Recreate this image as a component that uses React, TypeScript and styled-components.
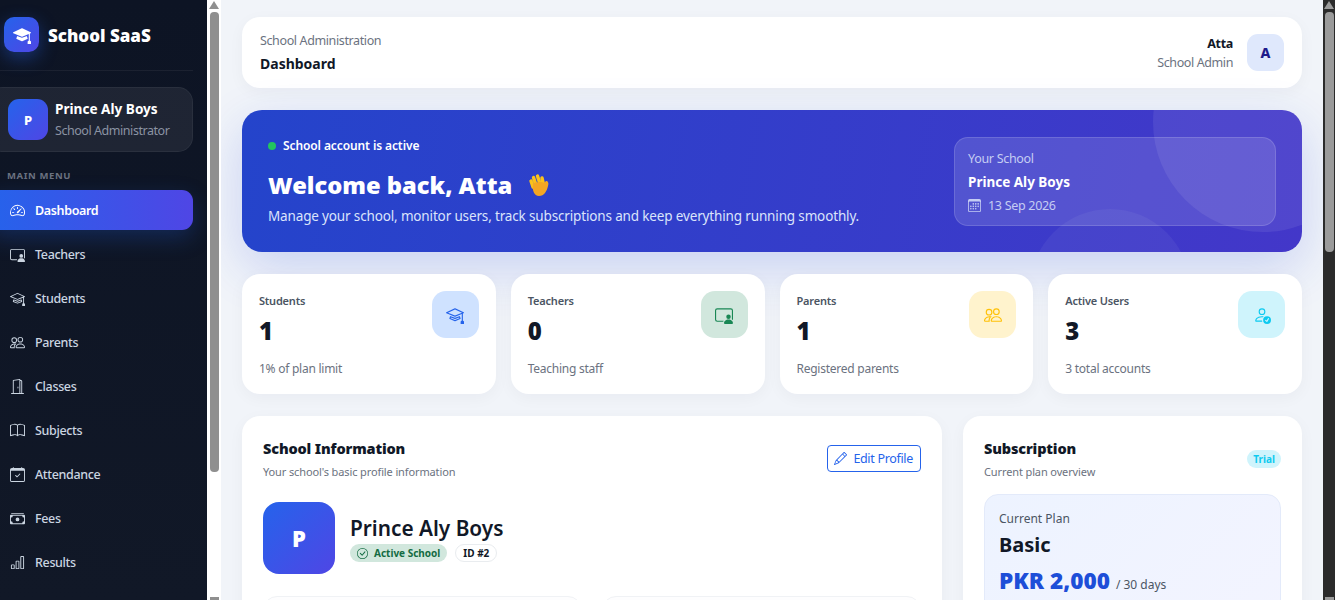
import styled, { createGlobalStyle } from 'styled-components';
import {
  BsSpeedometer2,
  BsPersonVideo3,
  BsMortarboard,
  BsMortarboardFill,
  BsPeople,
  BsDoorOpen,
  BsBook,
  BsCalendarCheck,
  BsCashStack,
  BsBarChart,
  BsCalendar3,
  BsPersonCheck,
  BsPencil,
  BsCheckCircle,
} from 'react-icons/bs';

const GlobalStyle = createGlobalStyle`
  html, body {
    margin: 0;
    height: 100%;
    overflow: hidden;
  }
  body {
    font-family: "Noto Sans", "Open Sans", "Liberation Sans", sans-serif;
    color: #111827;
  }
  * {
    box-sizing: border-box;
  }
`;

const Shell = styled.div`
  display: flex;
  height: 100vh;
  background: #f1f4f9;
`;

const Rail = styled.div<{ $track: string; $width: number }>`
  display: flex;
  flex-direction: column;
  align-items: center;
  flex: 0 0 ${(p) => p.$width}px;
  height: 100vh;
  overflow: hidden;
  background: ${(p) => p.$track};
`;

const ArrowUp = styled.div<{ $color: string }>`
  flex-shrink: 0;
  width: 0;
  height: 0;
  margin: 1px 0 3px;
  border-left: 5px solid transparent;
  border-right: 5px solid transparent;
  border-bottom: 8px solid ${(p) => p.$color};
`;

const ArrowDownCap = styled.div<{ $color: string }>`
  flex-shrink: 0;
  width: 9px;
  height: 3px;
  margin-top: auto;
  background: ${(p) => p.$color};
`;

const Thumb = styled.div<{ $color: string; $height: number }>`
  flex-shrink: 0;
  width: 9px;
  height: ${(p) => p.$height}px;
  border-radius: 4px;
  background: ${(p) => p.$color};
`;

const Sidebar = styled.aside`
  display: flex;
  flex: 0 0 221px;
  height: 100vh;
`;

const SidebarInner = styled.div`
  width: 207px;
  height: 100vh;
  overflow: hidden;
  padding: 17px 14px 0 0;
  background: linear-gradient(180deg, #0d1424 0%, #111827 100%);
`;

const Brand = styled.div`
  display: flex;
  align-items: center;
  gap: 9px;
  padding: 0 0 18px 4px;
  border-bottom: 1px solid rgba(255, 255, 255, 0.06);
`;

const BrandMark = styled.div`
  display: flex;
  align-items: center;
  justify-content: center;
  width: 35px;
  height: 35px;
  border-radius: 10px;
  color: #fff;
  font-size: 18px;
  background: linear-gradient(135deg, #2563eb, #4f46e5);
  box-shadow: 0 6px 18px rgba(37, 99, 235, 0.4);
`;

const BrandName = styled.span`
  position: relative;
  top: 1px;
  color: #fff;
  font-size: 17px;
  font-weight: 900;
`;

const SchoolCard = styled.div`
  display: flex;
  align-items: center;
  gap: 7px;
  height: 65px;
  margin: 16px 0 0 -12px;
  padding-left: 19px;
  border-radius: 15px;
  background: rgba(255, 255, 255, 0.07);
  border: 1px solid rgba(255, 255, 255, 0.05);
`;

const SchoolAvatar = styled.div`
  display: flex;
  align-items: center;
  justify-content: center;
  flex: 0 0 40px;
  height: 41px;
  border-radius: 11px;
  color: #fff;
  font-size: 13px;
  font-weight: 800;
  background: linear-gradient(135deg, #2563eb, #4f46e5);
`;

const SchoolCardName = styled.div`
  color: #fff;
  font-size: 13.6px;
  font-weight: 700;
  line-height: 20px;
  white-space: nowrap;
`;

const SchoolCardRole = styled.div`
  margin-top: 2px;
  color: #8b93a3;
  font-size: 12.5px;
  letter-spacing: -0.45px;
  line-height: 20px;
  white-space: nowrap;
`;

const MenuLabel = styled.div`
  margin: 17px 0 0 7px;
  color: #6b7280;
  font-size: 9.5px;
  font-weight: 700;
  letter-spacing: 0.6px;
  line-height: 14px;
`;

const Nav = styled.nav`
  display: flex;
  flex-direction: column;
  gap: 4.12px;
  margin: 7px 0 0 -12px;
`;

const NavItem = styled.a<{ $active?: boolean }>`
  display: flex;
  align-items: center;
  gap: 10px;
  height: 40px;
  padding-left: 22px;
  border-radius: 11px;
  font-size: 12.5px;
  letter-spacing: -0.35px;
  font-weight: ${(p) => (p.$active ? 600 : 500)};
  color: ${(p) => (p.$active ? '#fff' : '#cbd5e1')};
  background: ${(p) => (p.$active ? 'linear-gradient(90deg, #2563eb, #4f46e5)' : 'transparent')};
  box-shadow: ${(p) => (p.$active ? '0 8px 22px rgba(37, 99, 235, 0.25)' : 'none')};

  svg {
    font-size: 15px;
    flex-shrink: 0;
  }
`;

const Main = styled.main`
  flex: 1;
  min-width: 0;
  height: 100vh;
  overflow: hidden;
`;

const Content = styled.div`
  display: flex;
  flex-direction: column;
  gap: 22px;
  padding: 17px 21px 21px;
`;

const TopBar = styled.header`
  display: flex;
  align-items: center;
  justify-content: space-between;
  height: 71px;
  padding: 0 18px;
  border-radius: 18px;
  background: #fff;
  box-shadow: 0 4px 16px rgba(15, 23, 42, 0.04);
`;

const Crumb = styled.div`
  margin-top: 1px;
  color: #6b7280;
  font-size: 12.5px;
  letter-spacing: -0.38px;
  line-height: 18px;
`;

const PageTitle = styled.div`
  margin-top: 4px;
  color: #111827;
  font-size: 14px;
  font-weight: 700;
  line-height: 20px;
`;

const UserBox = styled.div`
  display: flex;
  align-items: center;
  gap: 14px;
  text-align: right;
`;

const UserName = styled.div`
  margin-top: 2px;
  font-size: 12.5px;
  font-weight: 700;
  letter-spacing: -0.3px;
  line-height: 18px;
`;

const UserRole = styled.div`
  color: #6b7280;
  font-size: 12.5px;
  letter-spacing: -0.4px;
  line-height: 19px;
`;

const UserAvatar = styled.div`
  display: flex;
  align-items: center;
  justify-content: center;
  width: 37px;
  height: 37px;
  border-radius: 11px;
  color: #1e1b8b;
  font-size: 14px;
  font-weight: 800;
  background: #dfe8fc;
`;

const HeroGlow = styled.div`
  height: 142px;
  border-radius: 20px;
  box-shadow: 0 16px 50px rgba(37, 70, 220, 0.2);
`;

const Hero = styled.section`
  position: relative;
  display: flex;
  align-items: center;
  justify-content: space-between;
  height: 142px;
  padding: 0 26px;
  overflow: hidden;
  border-radius: 20px;
  color: #fff;
  background: linear-gradient(100deg, #2444cb, #4337c9);
`;

const HeroCircle = styled.div<{ $size: number; $top: number; $right: number; $alpha: number }>`
  position: absolute;
  top: ${(p) => p.$top}px;
  right: ${(p) => p.$right}px;
  width: ${(p) => p.$size}px;
  height: ${(p) => p.$size}px;
  border-radius: 50%;
  background: rgba(255, 255, 255, ${(p) => p.$alpha});
`;

const HeroText = styled.div`
  position: relative;
`;

const StatusLine = styled.div`
  display: flex;
  align-items: center;
  gap: 7px;
  font-size: 12px;
  font-weight: 600;
  letter-spacing: -0.1px;
  line-height: 18px;
`;

const StatusDot = styled.span`
  width: 8px;
  height: 8px;
  border-radius: 50%;
  background: #22c55e;
`;

const HeroTitle = styled.h1`
  display: flex;
  align-items: center;
  gap: 16px;
  margin: 14px 0 0;
  font-size: 23.7px;
  font-weight: 900;
  line-height: 32px;
`;

const HeroSub = styled.p`
  margin: 5px 0 0;
  color: #dbe4fb;
  font-size: 13.5px;
  letter-spacing: -0.15px;
  line-height: 20px;
`;

const HeroSchool = styled.div`
  position: relative;
  width: 322px;
  height: 89px;
  padding: 12px 13px;
  border-radius: 14px;
  border: 1px solid rgba(255, 255, 255, 0.14);
  background: rgba(255, 255, 255, 0.13);
`;

const HeroSchoolLabel = styled.div`
  color: #c5cdf3;
  font-size: 12.5px;
  letter-spacing: -0.3px;
  line-height: 17px;
`;

const HeroSchoolName = styled.div`
  margin-top: 6px;
  font-size: 13.5px;
  font-weight: 700;
  line-height: 19px;
`;

const HeroSchoolDate = styled.div`
  display: flex;
  align-items: center;
  gap: 7px;
  margin-top: 4px;
  color: #c5cdf3;
  font-size: 12.5px;
  letter-spacing: -0.3px;
  line-height: 20px;
`;

const StatGrid = styled.div`
  display: grid;
  grid-template-columns: repeat(4, 1fr);
  gap: 15px;
`;

const StatCard = styled.div`
  display: flex;
  justify-content: space-between;
  height: 120px;
  padding: 17px 17px 0;
  border-radius: 18px;
  background: #fff;
  box-shadow: 0 4px 16px rgba(15, 23, 42, 0.04);
`;

const StatLabel = styled.div`
  margin-top: 2px;
  color: #4b5563;
  font-size: 11px;
  font-weight: 600;
  letter-spacing: -0.2px;
  line-height: 16px;
`;

const StatValue = styled.div`
  margin-top: 6px;
  color: #111827;
  font-size: 24px;
  font-weight: 900;
  line-height: 32px;
`;

const StatFoot = styled.div`
  margin-top: 13px;
  color: #6b7280;
  font-size: 12px;
  letter-spacing: -0.25px;
  line-height: 18px;
`;

const StatIcon = styled.div<{ $bg: string; $fg: string }>`
  display: flex;
  align-items: center;
  justify-content: center;
  width: 47px;
  height: 47px;
  border-radius: 14px;
  font-size: 18px;
  color: ${(p) => p.$fg};
  background: ${(p) => p.$bg};
`;

const PanelGrid = styled.div`
  display: grid;
  grid-template-columns: 700px 1fr;
  gap: 21px;
  align-items: start;
`;

const Panel = styled.section`
  padding: 21px;
  border-radius: 18px;
  background: #fff;
  box-shadow: 0 4px 16px rgba(15, 23, 42, 0.04);
`;

const PanelHead = styled.div`
  display: flex;
  align-items: center;
  justify-content: space-between;
`;

const PanelTitle = styled.h2`
  margin: 0;
  color: #111827;
  font-size: 14.5px;
  font-weight: 900;
  letter-spacing: -0.15px;
  line-height: 22px;
`;

const PanelSub = styled.div`
  margin-top: 5px;
  color: #6b7280;
  font-size: 11px;
  letter-spacing: -0.12px;
  line-height: 16px;
`;

const EditButton = styled.button`
  display: flex;
  align-items: center;
  gap: 6px;
  height: 27px;
  padding: 0 7px 0 6px;
  border: 1px solid #2563eb;
  border-radius: 4px;
  color: #2563eb;
  font-family: inherit;
  font-size: 12.5px;
  letter-spacing: -0.32px;
  background: #fff;
`;

const ProfileRow = styled.div`
  display: flex;
  align-items: center;
  gap: 15px;
  margin-top: 22px;
`;

const ProfileAvatar = styled.div`
  display: flex;
  align-items: center;
  justify-content: center;
  width: 72px;
  height: 72px;
  border-radius: 16px;
  color: #fff;
  font-size: 22px;
  font-weight: 900;
  background: linear-gradient(135deg, #2563eb, #4f46e5);
`;

const ProfileName = styled.div`
  margin-top: -1px;
  font-size: 20.8px;
  font-weight: 600;
  line-height: 30px;
`;

const PillRow = styled.div`
  display: flex;
  gap: 8px;
  margin-top: 1px;
`;

const Pill = styled.span<{ $bg: string; $fg: string; $line?: string }>`
  display: inline-flex;
  align-items: center;
  gap: 6px;
  height: 18px;
  padding: 0 7px;
  border-radius: 9px;
  font-size: 10px;
  font-weight: 700;
  color: ${(p) => p.$fg};
  background: ${(p) => p.$bg};
  border: ${(p) => (p.$line ? `1px solid ${p.$line}` : 'none')};
`;

const TrialPill = styled(Pill)`
  padding: 0 6px;
`;

const InfoGrid = styled.div`
  display: grid;
  grid-template-columns: 1fr 1fr;
  gap: 20px;
  margin-top: 22px;
`;

const InfoBox = styled.div`
  height: 70px;
  border: 1px solid #f0f2f5;
  border-radius: 14px;
  background: #fdfdfe;
`;

const PlanBox = styled.div`
  margin-top: 14px;
  height: 150px;
  padding: 15px 14px;
  border: 1px solid #e3eafa;
  border-radius: 14px;
  background: linear-gradient(135deg, #edf3ff, #f3f4ff);
`;

const PlanLabel = styled.div`
  color: #4b5563;
  font-size: 12px;
  line-height: 18px;
`;

const PlanName = styled.div`
  margin-top: 2px;
  font-size: 20px;
  font-weight: 700;
  line-height: 30px;
`;

const PlanPrice = styled.div`
  display: flex;
  align-items: baseline;
  gap: 6px;
  margin-top: 6px;
  color: #1d4ed8;
  font-size: 22.6px;
  font-weight: 900;
  line-height: 30px;
`;

const PlanTerm = styled.span`
  color: #4b5563;
  font-size: 12px;
  font-weight: 400;
`;

const navItems = [
  { label: 'Dashboard', icon: BsSpeedometer2, active: true },
  { label: 'Teachers', icon: BsPersonVideo3 },
  { label: 'Students', icon: BsMortarboard },
  { label: 'Parents', icon: BsPeople },
  { label: 'Classes', icon: BsDoorOpen },
  { label: 'Subjects', icon: BsBook },
  { label: 'Attendance', icon: BsCalendarCheck },
  { label: 'Fees', icon: BsCashStack },
  { label: 'Results', icon: BsBarChart },
];

const stats = [
  { label: 'Students', value: '1', foot: '1% of plan limit', icon: BsMortarboard, bg: '#cfe2ff', fg: '#2563eb' },
  { label: 'Teachers', value: '0', foot: 'Teaching staff', icon: BsPersonVideo3, bg: '#d1e7dd', fg: '#198754' },
  { label: 'Parents', value: '1', foot: 'Registered parents', icon: BsPeople, bg: '#fff3cd', fg: '#ffc107' },
  { label: 'Active Users', value: '3', foot: '3 total accounts', icon: BsPersonCheck, bg: '#cff4fc', fg: '#0dcaf0' },
];

function WaveHand() {
  return (
    <svg width="23" height="24" viewBox="0 0 23 24" fill="none" strokeLinecap="round">
      <path d="M5 14 3 8M8 12 5.500 4.500M12 11 9.500 3M15.500 11.500 14 5" stroke="#fcc21b" strokeWidth="3.4" />
      <path d="M5 11c1-2 9-3 11-1l2-2c2 0 3 2 2 5-1 5-4 10-9 10-5 0-7-6-6-12Z" fill="#f5a623" />
    </svg>
  );
}

export default function App() {
  return (
    <>
      <GlobalStyle />
      <Shell>
        <Sidebar>
          <SidebarInner>
            <Brand>
              <BrandMark>
                <BsMortarboardFill />
              </BrandMark>
              <BrandName>School SaaS</BrandName>
            </Brand>
            <SchoolCard>
              <SchoolAvatar>P</SchoolAvatar>
              <div>
                <SchoolCardName>Prince Aly Boys</SchoolCardName>
                <SchoolCardRole>School Administrator</SchoolCardRole>
              </div>
            </SchoolCard>
            <MenuLabel>MAIN MENU</MenuLabel>
            <Nav>
              {navItems.map((item) => (
                <NavItem key={item.label} $active={item.active}>
                  <item.icon />
                  {item.label}
                </NavItem>
              ))}
            </Nav>
          </SidebarInner>
          <Rail $track="#fff" $width={14}>
            <ArrowUp $color="#8f8f8f" />
            <Thumb $color="#8f8f8f" $height={460} />
            <ArrowDownCap $color="#8f8f8f" />
          </Rail>
        </Sidebar>
        <Main>
          <Content>
            <TopBar>
              <div>
                <Crumb>School Administration</Crumb>
                <PageTitle>Dashboard</PageTitle>
              </div>
              <UserBox>
                <div>
                  <UserName>Atta</UserName>
                  <UserRole>School Admin</UserRole>
                </div>
                <UserAvatar>A</UserAvatar>
              </UserBox>
            </TopBar>

            <HeroGlow>
              <Hero>
                <HeroCircle $size={220} $top={-98} $right={-71} $alpha={0.08} />
                <HeroCircle $size={160} $top={99} $right={112} $alpha={0.05} />
                <HeroText>
                  <StatusLine>
                    <StatusDot />
                    School account is active
                  </StatusLine>
                  <HeroTitle>
                    Welcome back, Atta
                    <WaveHand />
                  </HeroTitle>
                  <HeroSub>Manage your school, monitor users, track subscriptions and keep everything running smoothly.</HeroSub>
                </HeroText>
                <HeroSchool>
                  <HeroSchoolLabel>Your School</HeroSchoolLabel>
                  <HeroSchoolName>Prince Aly Boys</HeroSchoolName>
                  <HeroSchoolDate>
                    <BsCalendar3 size={13} />
                    13 Sep 2026
                  </HeroSchoolDate>
                </HeroSchool>
              </Hero>
            </HeroGlow>

            <StatGrid>
              {stats.map((s) => (
                <StatCard key={s.label}>
                  <div>
                    <StatLabel>{s.label}</StatLabel>
                    <StatValue>{s.value}</StatValue>
                    <StatFoot>{s.foot}</StatFoot>
                  </div>
                  <StatIcon $bg={s.bg} $fg={s.fg}>
                    <s.icon />
                  </StatIcon>
                </StatCard>
              ))}
            </StatGrid>

            <PanelGrid>
              <Panel>
                <PanelHead>
                  <div>
                    <PanelTitle>School Information</PanelTitle>
                    <PanelSub>Your school's basic profile information</PanelSub>
                  </div>
                  <EditButton>
                    <BsPencil size={13} />
                    Edit Profile
                  </EditButton>
                </PanelHead>
                <ProfileRow>
                  <ProfileAvatar>P</ProfileAvatar>
                  <div>
                    <ProfileName>Prince Aly Boys</ProfileName>
                    <PillRow>
                      <Pill $bg="#d1e7dd" $fg="#146c43">
                        <BsCheckCircle size={11} />
                        Active School
                      </Pill>
                      <Pill $bg="#fff" $fg="#111827" $line="#e9ecef">
                        ID #2
                      </Pill>
                    </PillRow>
                  </div>
                </ProfileRow>
                <InfoGrid>
                  <InfoBox />
                  <InfoBox />
                </InfoGrid>
              </Panel>
              <Panel>
                <PanelHead>
                  <div>
                    <PanelTitle>Subscription</PanelTitle>
                    <PanelSub>Current plan overview</PanelSub>
                  </div>
                  <TrialPill $bg="#cff4fc" $fg="#0dcaf0">
                    Trial
                  </TrialPill>
                </PanelHead>
                <PlanBox>
                  <PlanLabel>Current Plan</PlanLabel>
                  <PlanName>Basic</PlanName>
                  <PlanPrice>
                    PKR 2,000
                    <PlanTerm>/ 30 days</PlanTerm>
                  </PlanPrice>
                </PlanBox>
              </Panel>
            </PanelGrid>
          </Content>
        </Main>
        <Rail $track="#2b2b2b" $width={12}>
          <ArrowUp $color="#9b9b9b" />
          <Thumb $color="#9b9b9b" $height={240} />
          <ArrowDownCap $color="#9b9b9b" />
        </Rail>
      </Shell>
    </>
  );
}
